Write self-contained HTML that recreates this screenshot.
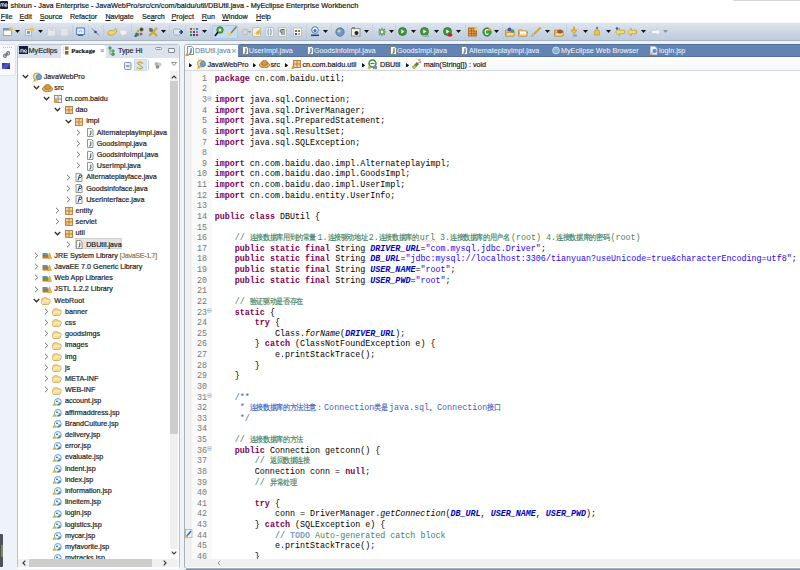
<!DOCTYPE html><html><head><meta charset="utf-8"><style>
html,body{margin:0;padding:0;width:800px;height:570px;overflow:hidden;background:#fff;}
body{position:relative;font-family:"Liberation Sans",sans-serif;}
div{position:absolute;box-sizing:border-box;}
.t{white-space:pre;line-height:1;color:#1e1e1e;-webkit-text-stroke:0.2px currentColor;}
.c{white-space:pre;font-family:"Liberation Mono",monospace;font-size:8.37px;line-height:10.62px;color:#000;}
.k{color:#7f0055;font-weight:bold;}
.s{color:#2a00ff;}
.cm{color:#3f7f5f;}
.jd{color:#3f5fbf;}
.f{color:#0000c0;font-weight:bold;font-style:italic;}
.i{font-style:italic;}
.zh{display:inline-block;width:6.64px;overflow:visible;font-size:7.1px;line-height:0;text-align:center;-webkit-text-stroke:0.15px currentColor;transform:scaleY(1.12);}
.todo{color:#7f9fbf;font-weight:bold;}
.ln{color:#787878;font-family:"Liberation Mono",monospace;font-size:8.35px;line-height:10.62px;text-align:right;white-space:pre;}

</style></head><body>
<div style="left:0px;top:0px;width:800px;height:11px;background:#fff;"></div>
<div style="left:0px;top:1px;width:8px;height:8px;background:#0f1d3a;border-radius:1px;"></div>
<svg style="position:absolute;left:0;top:1px" width="8" height="8" viewBox="0 0 8 8"><path d="M0.8 5.5V3.2Q0.8 2.5 1.6 2.5Q2.4 2.5 2.4 3.2V5.5M2.4 3.2Q2.4 2.5 3.2 2.5Q4 2.5 4 3.2V5.5" stroke="#e8eef6" stroke-width="0.8" fill="none"/><path d="M7.2 4.3H4.8Q4.8 2.6 6 2.6Q7.2 2.6 7.2 4.3ZM4.8 4.3Q4.8 5.6 6.2 5.6H7.2" stroke="#e8eef6" stroke-width="0.8" fill="none"/></svg>
<div class="t" style="left:10.6px;top:1.8px;font-size:7.32px;color:#1a1a1a;">shixun - Java Enterprise - JavaWebPro/src/cn/com/baidu/util/DBUtil.java - MyEclipse Enterprise Workbench</div>
<div class="t" style="left:0.8px;top:13.3px;font-size:7.2px;color:#1a1a1a;"><u>F</u>ile</div>
<div class="t" style="left:19.5px;top:13.3px;font-size:7.2px;color:#1a1a1a;"><u>E</u>dit</div>
<div class="t" style="left:39.8px;top:13.3px;font-size:7.2px;color:#1a1a1a;"><u>S</u>ource</div>
<div class="t" style="left:69.9px;top:13.3px;font-size:7.2px;color:#1a1a1a;">Refac<u>t</u>or</div>
<div class="t" style="left:105.4px;top:13.3px;font-size:7.2px;color:#1a1a1a;"><u>N</u>avigate</div>
<div class="t" style="left:142px;top:13.3px;font-size:7.2px;color:#1a1a1a;">Se<u>a</u>rch</div>
<div class="t" style="left:171.5px;top:13.3px;font-size:7.2px;color:#1a1a1a;"><u>P</u>roject</div>
<div class="t" style="left:201.8px;top:13.3px;font-size:7.2px;color:#1a1a1a;"><u>R</u>un</div>
<div class="t" style="left:222px;top:13.3px;font-size:7.2px;color:#1a1a1a;"><u>W</u>indow</div>
<div class="t" style="left:256px;top:13.3px;font-size:7.2px;color:#1a1a1a;"><u>H</u>elp</div>
<div style="left:0px;top:22px;width:800px;height:18.5px;background:linear-gradient(#dfe6ef,#c9d4e2 60%,#bccadb);"></div>
<div style="left:0px;top:22px;width:800px;height:1px;background:#f4f7fa;"></div>
<div style="left:733px;top:0px;width:67px;height:1.3px;background:#d6d6d6;border-radius:0 0 0 2px;"></div>
<div style="left:0px;top:40px;width:800px;height:1px;background:#a9b4c2;"></div>
<div style="left:0px;top:41px;width:800px;height:3px;background:#eef2f7;"></div>
<svg style="position:absolute;left:2.5px;top:26.8px" width="10" height="10" viewBox="0 0 10 10"><rect x="0.5" y="1.5" width="8" height="7" fill="#fbfbf6" stroke="#8a97a8" stroke-width="0.8"/><rect x="0.5" y="1.5" width="8" height="2" fill="#5a8fd0"/><circle cx="8" cy="2" r="2" fill="#f0c040"/></svg>
<svg style="position:absolute;left:15.0px;top:30.4px" width="5" height="3" viewBox="0 0 5 3"><path d="M0 0H5L2.5 3Z" fill="#111"/></svg>
<svg style="position:absolute;left:25px;top:26.8px" width="10" height="10" viewBox="0 0 10 10"><rect x="0.5" y="2.5" width="6" height="6" fill="#f5f8fb" stroke="#9aa8b8" stroke-width="0.8"/><rect x="2" y="4" width="3" height="3" fill="#6a9ad0"/><circle cx="7" cy="2.5" r="2" fill="#f0c040"/></svg>
<svg style="position:absolute;left:37.5px;top:30.4px" width="5" height="3" viewBox="0 0 5 3"><path d="M0 0H5L2.5 3Z" fill="#111"/></svg>
<svg style="position:absolute;left:47px;top:26.8px" width="9" height="10" viewBox="0 0 9 10"><rect x="0.5" y="1" width="8" height="8" fill="#e6e8ea" stroke="#c8cdd2" stroke-width="0.8"/><rect x="2.5" y="1" width="4" height="3" fill="#d2d5d9"/></svg>
<svg style="position:absolute;left:60px;top:26.8px" width="9" height="10" viewBox="0 0 9 10"><rect x="0.5" y="1" width="8" height="8" rx="2" fill="#e2e4e6" stroke="#cdd1d5" stroke-width="0.8"/></svg>
<div style="left:72px;top:25px;width:1px;height:13px;background:repeating-linear-gradient(#bcc6d2 0 1px,transparent 1px 2px);"></div>
<svg style="position:absolute;left:76px;top:26.8px" width="9" height="10" viewBox="0 0 9 10"><rect x="0.7" y="1" width="7.6" height="6.5" fill="#ffffff" stroke="#3a68b8" stroke-width="0.9"/><rect x="2" y="2.3" width="5" height="3.8" fill="#dce8f6"/><path d="M3 4.8L4.5 3.5L6 4.8" stroke="#6a8ab0" stroke-width="0.6" fill="none"/><rect x="2" y="8" width="5" height="1" fill="#3a68b8"/></svg>
<div style="left:88px;top:25px;width:1px;height:13px;background:repeating-linear-gradient(#bcc6d2 0 1px,transparent 1px 2px);"></div>
<svg style="position:absolute;left:91px;top:26.8px" width="9" height="10" viewBox="0 0 9 10"><path d="M1 1.5L8 8.5" stroke="#4a78c8" stroke-width="1"/><circle cx="4.5" cy="5" r="1.3" fill="#3a4a6a"/></svg>
<div style="left:103px;top:25px;width:1px;height:13px;background:repeating-linear-gradient(#bcc6d2 0 1px,transparent 1px 2px);"></div>
<svg style="position:absolute;left:107px;top:26.8px" width="10" height="10" viewBox="0 0 10 10"><path d="M0.5 6Q3 2 6 4L9 1.5L9.5 5Q7 9 2 8Z" fill="#f3d868" stroke="#b39630" stroke-width="0.7"/></svg>
<svg style="position:absolute;left:119px;top:26.8px" width="9" height="10" viewBox="0 0 9 10"><path d="M0.5 4Q4 1 8.5 5Q7 9 2 8Z" fill="#f2f2f2" stroke="#c8c8c8" stroke-width="0.7"/></svg>
<div style="left:131px;top:25px;width:1px;height:13px;background:repeating-linear-gradient(#bcc6d2 0 1px,transparent 1px 2px);"></div>
<svg style="position:absolute;left:134px;top:26.8px" width="10" height="10" viewBox="0 0 10 10"><circle cx="7.5" cy="2.5" r="2" fill="#444" stroke="#8c8" stroke-width="0.6"/><circle cx="3" cy="7.5" r="2" fill="#3a8a3a"/><circle cx="7" cy="7" r="1.5" fill="#d04080"/><circle cx="4" cy="4" r="1.3" fill="#e0a030"/><circle cx="1.5" cy="9" r="1.2" fill="#3060c0"/></svg>
<svg style="position:absolute;left:148px;top:26.8px" width="10" height="10" viewBox="0 0 10 10"><path d="M1 1L9 9M9 1L1 9" stroke="#d4a82a" stroke-width="2.2"/><circle cx="3" cy="3" r="2" fill="#6a6a8a"/></svg>
<svg style="position:absolute;left:161.0px;top:30.4px" width="5" height="3" viewBox="0 0 5 3"><path d="M0 0H5L2.5 3Z" fill="#111"/></svg>
<div style="left:169px;top:25px;width:1px;height:13px;background:repeating-linear-gradient(#bcc6d2 0 1px,transparent 1px 2px);"></div>
<svg style="position:absolute;left:173px;top:26.8px" width="10" height="10" viewBox="0 0 10 10"><rect x="0.5" y="2" width="7" height="6" rx="1.5" fill="#dde8f5" stroke="#8aa0b8" stroke-width="0.8"/><path d="M6 5L9.5 5M7.8 3L9.5 5L7.8 7" stroke="#1a2a4a" stroke-width="1.1" fill="none"/></svg>
<div style="left:185px;top:25px;width:1px;height:13px;background:repeating-linear-gradient(#bcc6d2 0 1px,transparent 1px 2px);"></div>
<svg style="position:absolute;left:189px;top:26.8px" width="10" height="10" viewBox="0 0 10 10"><rect x="1" y="1" width="2" height="2" fill="#d04040"/><rect x="4" y="1" width="2" height="2" fill="#e0a030"/><rect x="7" y="1" width="2" height="2" fill="#3a8ad0"/><rect x="1" y="4" width="2" height="2" fill="#40a040"/><rect x="4" y="4" width="2" height="2" fill="#3050c0"/><rect x="7" y="4" width="2" height="2" fill="#d060c0"/><rect x="1" y="7" width="2" height="2" fill="#208060"/><rect x="4" y="7" width="2" height="2" fill="#404040"/><rect x="7" y="7" width="2" height="2" fill="#a04020"/></svg>
<svg style="position:absolute;left:202.0px;top:30.4px" width="5" height="3" viewBox="0 0 5 3"><path d="M0 0H5L2.5 3Z" fill="#111"/></svg>
<div style="left:210px;top:25px;width:1px;height:13px;background:repeating-linear-gradient(#bcc6d2 0 1px,transparent 1px 2px);"></div>
<div style="left:212px;top:24.5px;width:26px;height:14.5px;background:#c6dcf2;border:1px solid #b0c8e4;border-radius:2px;"></div>
<svg style="position:absolute;left:214px;top:25.8px" width="10" height="11" viewBox="0 0 10 11"><circle cx="6" cy="4" r="3.2" fill="#5ab048" stroke="#2a6a20" stroke-width="0.8"/><circle cx="6" cy="4" r="1.2" fill="#fff"/><path d="M4 6L1 10" stroke="#111" stroke-width="1.5"/></svg>
<svg style="position:absolute;left:227px;top:25.8px" width="10" height="11" viewBox="0 0 10 11"><path d="M9.5 0.5L4 7" stroke="#7a7a40" stroke-width="1.2"/><path d="M0.5 10Q1 6 4 6.5Q6 8 3 10Z" fill="#f0d040"/></svg>
<svg style="position:absolute;left:241px;top:26.8px" width="10" height="10" viewBox="0 0 10 10"><circle cx="4" cy="5" r="3" fill="#d8d8d8" stroke="#a8a8a8" stroke-width="0.7"/><path d="M7 4H10L8.5 6Z" fill="#999"/></svg>
<svg style="position:absolute;left:252px;top:26.8px" width="10" height="10" viewBox="0 0 10 10"><rect x="0.5" y="0.5" width="8" height="9" rx="1.5" fill="#f2f0e6" stroke="#b8b49a" stroke-width="0.8"/><path d="M3 7Q6 2 9 3L7 8Z" fill="#e6b83a"/></svg>
<svg style="position:absolute;left:265px;top:26.8px" width="9" height="10" viewBox="0 0 9 10"><rect x="0.5" y="0.5" width="8" height="9" rx="1.5" fill="#f0f2f4" stroke="#b8bcc2" stroke-width="0.8"/><path d="M4 2Q3 2 3 3.5V6.5Q3 8 4 8M5 2Q6 2 6 3.5V6.5Q6 8 5 8" stroke="#4a6a9a" stroke-width="0.8" fill="none"/></svg>
<svg style="position:absolute;left:278px;top:26.8px" width="9" height="10" viewBox="0 0 9 10"><rect x="0.5" y="0.5" width="8" height="9" rx="1.5" fill="#f4f2e6" stroke="#c0b890" stroke-width="0.8"/><path d="M4 2.5V8M6 2.5V8M6.5 2.5H3.5Q2 2.5 2 4Q2 5.5 4 5.5" stroke="#2a5aa0" stroke-width="0.9" fill="none"/></svg>
<div style="left:290px;top:25px;width:1px;height:13px;background:repeating-linear-gradient(#bcc6d2 0 1px,transparent 1px 2px);"></div>
<svg style="position:absolute;left:293px;top:26.8px" width="9" height="10" viewBox="0 0 9 10"><rect x="0.5" y="1" width="8" height="8" fill="#fff" stroke="#b0b0b0" stroke-width="0.7"/><rect x="2" y="3" width="2" height="2" fill="#d04040"/><rect x="5" y="3" width="2" height="2" fill="#40a040"/><rect x="2" y="6" width="2" height="2" fill="#3050c0"/><rect x="5" y="6" width="2" height="2" fill="#e0a030"/></svg>
<div style="left:306px;top:25px;width:1px;height:13px;background:repeating-linear-gradient(#bcc6d2 0 1px,transparent 1px 2px);"></div>
<svg style="position:absolute;left:310px;top:25.8px" width="10" height="11" viewBox="0 0 10 11"><circle cx="5" cy="4" r="3.3" fill="#eef4fb" stroke="#4a7ab8" stroke-width="1"/><circle cx="5" cy="4.5" r="1.5" fill="#4a6a8a"/><rect x="1" y="8.5" width="8" height="1.6" fill="#2a4a7a"/></svg>
<svg style="position:absolute;left:322.5px;top:30.4px" width="5" height="3" viewBox="0 0 5 3"><path d="M0 0H5L2.5 3Z" fill="#111"/></svg>
<div style="left:331px;top:25px;width:1px;height:13px;background:repeating-linear-gradient(#bcc6d2 0 1px,transparent 1px 2px);"></div>
<svg style="position:absolute;left:335px;top:26.8px" width="10" height="10" viewBox="0 0 10 10"><circle cx="5" cy="5" r="4.2" fill="#6a9ad0" stroke="#3a6aa8" stroke-width="0.7"/><circle cx="4" cy="4" r="1.6" fill="#f0d070"/></svg>
<div style="left:347px;top:25px;width:1px;height:13px;background:repeating-linear-gradient(#bcc6d2 0 1px,transparent 1px 2px);"></div>
<svg style="position:absolute;left:351px;top:26.8px" width="10" height="10" viewBox="0 0 10 10"><rect x="0.5" y="1.5" width="8.5" height="7.5" fill="#efefe8" stroke="#8a8a80" stroke-width="0.9"/><circle cx="5.5" cy="6" r="2" fill="#222"/><rect x="1" y="0" width="3" height="2" fill="#888"/></svg>
<svg style="position:absolute;left:363.5px;top:30.4px" width="5" height="3" viewBox="0 0 5 3"><path d="M0 0H5L2.5 3Z" fill="#111"/></svg>
<div style="left:372px;top:25px;width:1px;height:13px;background:repeating-linear-gradient(#bcc6d2 0 1px,transparent 1px 2px);"></div>
<svg style="position:absolute;left:377px;top:26.8px" width="10" height="10" viewBox="0 0 10 10"><circle cx="5" cy="5" r="3" fill="#8ab08a"/><path d="M5 0.8V9.2M0.8 5H9.2M2 2L8 8M8 2L2 8" stroke="#6a946a" stroke-width="1.2"/><circle cx="5" cy="5" r="1.4" fill="#e8f0e8"/></svg>
<svg style="position:absolute;left:388.5px;top:30.4px" width="5" height="3" viewBox="0 0 5 3"><path d="M0 0H5L2.5 3Z" fill="#111"/></svg>
<div style="left:395px;top:25px;width:1px;height:13px;background:repeating-linear-gradient(#bcc6d2 0 1px,transparent 1px 2px);"></div>
<svg style="position:absolute;left:397.5px;top:26.8px" width="10" height="10" viewBox="0 0 10 10"><circle cx="4.5" cy="4.5" r="4" fill="#3a9a3a" stroke="#2a6a2a" stroke-width="0.7"/><path d="M3.3 2.5L6.5 4.5L3.3 6.5Z" fill="#fff"/></svg>
<svg style="position:absolute;left:411.0px;top:30.4px" width="5" height="3" viewBox="0 0 5 3"><path d="M0 0H5L2.5 3Z" fill="#111"/></svg>
<svg style="position:absolute;left:420px;top:26.8px" width="10" height="10" viewBox="0 0 10 10"><circle cx="4.5" cy="4.5" r="4" fill="#3a9a3a" stroke="#2a6a2a" stroke-width="0.7"/><path d="M3.3 2.5L6.5 4.5L3.3 6.5Z" fill="#fff"/><rect x="3" y="8" width="6" height="2" fill="#9ab0c8"/></svg>
<svg style="position:absolute;left:433.5px;top:30.4px" width="5" height="3" viewBox="0 0 5 3"><path d="M0 0H5L2.5 3Z" fill="#111"/></svg>
<svg style="position:absolute;left:443px;top:26.8px" width="10" height="10" viewBox="0 0 10 10"><circle cx="4.5" cy="4.5" r="4" fill="#3a9a3a" stroke="#2a6a2a" stroke-width="0.7"/><path d="M3.3 2.5L6.5 4.5L3.3 6.5Z" fill="#fff"/><ellipse cx="7" cy="8" rx="2.5" ry="1.8" fill="#d02020"/></svg>
<svg style="position:absolute;left:455.5px;top:30.4px" width="5" height="3" viewBox="0 0 5 3"><path d="M0 0H5L2.5 3Z" fill="#111"/></svg>
<div style="left:465px;top:25px;width:1px;height:13px;background:repeating-linear-gradient(#bcc6d2 0 1px,transparent 1px 2px);"></div>
<svg style="position:absolute;left:468px;top:26.8px" width="10" height="10" viewBox="0 0 10 10"><rect x="0.5" y="1" width="8" height="8" fill="#e8a050" stroke="#9a5a1e" stroke-width="0.8"/><path d="M3.5 1V9M6 1V9M0.5 4H8.5M0.5 6.5H8.5" stroke="#9a5a1e" stroke-width="0.7"/><circle cx="8" cy="2" r="1.8" fill="#f0d060"/></svg>
<svg style="position:absolute;left:482px;top:26.8px" width="10" height="10" viewBox="0 0 10 10"><circle cx="5" cy="5" r="4.2" fill="#3a9a3a" stroke="#2a6a2a" stroke-width="0.6"/><path d="M6.5 3Q5 2 3.5 3.5Q2.5 5.5 4 7Q5.5 7.8 6.5 6.5" stroke="#fff" stroke-width="1.2" fill="none"/><circle cx="7.5" cy="2.5" r="1.6" fill="#e8a040"/></svg>
<svg style="position:absolute;left:493.5px;top:30.4px" width="5" height="3" viewBox="0 0 5 3"><path d="M0 0H5L2.5 3Z" fill="#111"/></svg>
<div style="left:502px;top:25px;width:1px;height:13px;background:repeating-linear-gradient(#bcc6d2 0 1px,transparent 1px 2px);"></div>
<svg style="position:absolute;left:505px;top:26.8px" width="10" height="10" viewBox="0 0 10 10"><path d="M0.5 3H4L5 4H9V9H0.5Z" fill="#f2c060" stroke="#b08430" stroke-width="0.7"/><path d="M0.5 9L1.8 5.5H9.5L8.5 9Z" fill="#f8dc98" stroke="#b08430" stroke-width="0.6"/><circle cx="4.5" cy="2.5" r="2" fill="#5050b0"/><circle cx="7.5" cy="4" r="1.8" fill="#40a040"/></svg>
<svg style="position:absolute;left:518px;top:26.8px" width="10" height="10" viewBox="0 0 10 10"><path d="M0.5 3H4L5 4H9V9H0.5Z" fill="#f2c060" stroke="#b08430" stroke-width="0.7"/><path d="M0.5 9L1.8 5.5H9.5L8.5 9Z" fill="#f8dc98" stroke="#b08430" stroke-width="0.6"/><rect x="2" y="4.5" width="6" height="2" fill="#fff"/></svg>
<svg style="position:absolute;left:531px;top:26.8px" width="10" height="10" viewBox="0 0 10 10"><path d="M9.5 0.5L3 7" stroke="#d0a040" stroke-width="1.8"/><path d="M0.5 9.5L2 6.5L3.5 8Z" fill="#f4f0e0" stroke="#8a8a70" stroke-width="0.6"/></svg>
<svg style="position:absolute;left:544.5px;top:30.4px" width="5" height="3" viewBox="0 0 5 3"><path d="M0 0H5L2.5 3Z" fill="#111"/></svg>
<svg style="position:absolute;left:554px;top:26.8px" width="10" height="10" viewBox="0 0 10 10"><path d="M0.5 3H4L5 4H9V9H0.5Z" fill="#f2c060" stroke="#b08430" stroke-width="0.7"/><path d="M0.5 9L1.8 5.5H9.5L8.5 9Z" fill="#f8dc98" stroke="#b08430" stroke-width="0.6"/><ellipse cx="6" cy="4.5" rx="2.8" ry="2" fill="#a05a30"/></svg>
<div style="left:566px;top:25px;width:1px;height:13px;background:repeating-linear-gradient(#bcc6d2 0 1px,transparent 1px 2px);"></div>
<svg style="position:absolute;left:570px;top:25.8px" width="8" height="11" viewBox="0 0 8 11"><path d="M4 0.5V6" stroke="#d0a030" stroke-width="1.6"/><path d="M1 4L4 8L7 4Z" fill="#f0c840" stroke="#b08a20" stroke-width="0.6"/><rect x="3" y="8.5" width="4" height="2" fill="#8aa0c0"/></svg>
<svg style="position:absolute;left:582.5px;top:30.4px" width="5" height="3" viewBox="0 0 5 3"><path d="M0 0H5L2.5 3Z" fill="#111"/></svg>
<svg style="position:absolute;left:593px;top:25.8px" width="8" height="11" viewBox="0 0 8 11"><circle cx="4" cy="2" r="1.2" fill="#5a78c0"/><path d="M2 4H6L6.5 9H1.5Z" fill="#f0c840" stroke="#b08a20" stroke-width="0.6"/></svg>
<svg style="position:absolute;left:605.5px;top:30.4px" width="5" height="3" viewBox="0 0 5 3"><path d="M0 0H5L2.5 3Z" fill="#111"/></svg>
<svg style="position:absolute;left:615px;top:26.8px" width="10" height="10" viewBox="0 0 10 10"><path d="M0.5 5L4.5 1.2V3.3H9.5V6.7H4.5V8.8Z" fill="#f4dc70" stroke="#b8a040" stroke-width="0.8"/><circle cx="2" cy="1.5" r="1.2" fill="#3050a0"/></svg>
<svg style="position:absolute;left:627px;top:26.8px" width="10" height="10" viewBox="0 0 10 10"><path d="M0.5 5L4.5 1.2V3.3H9.5V6.7H4.5V8.8Z" fill="#f4dc70" stroke="#b8a040" stroke-width="0.8"/></svg>
<svg style="position:absolute;left:640.5px;top:30.4px" width="5" height="3" viewBox="0 0 5 3"><path d="M0 0H5L2.5 3Z" fill="#111"/></svg>
<svg style="position:absolute;left:651px;top:26.8px" width="10" height="10" viewBox="0 0 10 10"><path d="M9.5 5L5.5 1.2V3.3H0.5V6.7H5.5V8.8Z" fill="#f6f6f6" stroke="#c4c8cc" stroke-width="0.8"/></svg>
<svg style="position:absolute;left:663.0px;top:30.4px" width="5" height="3" viewBox="0 0 5 3"><path d="M0 0H5L2.5 3Z" fill="#8a94a0"/></svg>
<div style="left:0px;top:44px;width:800px;height:526px;background:#eef2f9;"></div>
<div style="left:-3px;top:43.5px;width:18.5px;height:32px;background:#f8fafd;border:1px solid #dde3ec;border-radius:3px;"></div>
<div style="left:17.1px;top:43.6px;width:163.4px;height:525px;background:#fff;border:1.3px solid #b9c1cc;border-radius:3px 3px 3px 3px;"></div>
<div style="left:18.4px;top:44.6px;width:161px;height:13px;background:#dbe3ed;border-radius:2px 2px 0 0;"></div>
<div style="left:18.9px;top:45.9px;width:9px;height:8.6px;background:#0f1d3a;"></div>
<svg style="position:absolute;left:19px;top:46.5px" width="9" height="8" viewBox="0 0 8 8"><path d="M0.8 5.5V3.2Q0.8 2.5 1.6 2.5Q2.4 2.5 2.4 3.2V5.5M2.4 3.2Q2.4 2.5 3.2 2.5Q4 2.5 4 3.2V5.5" stroke="#e8eef6" stroke-width="0.8" fill="none"/><path d="M7.2 4.3H4.8Q4.8 2.6 6 2.6Q7.2 2.6 7.2 4.3ZM4.8 4.3Q4.8 5.6 6.2 5.6H7.2" stroke="#e8eef6" stroke-width="0.8" fill="none"/></svg>
<div class="t" style="left:28.6px;top:47.3px;font-size:7.2px;color:#1f2b3a;">MyEclips</div>
<div style="left:61.1px;top:44.6px;width:44.6px;height:13.4px;background:#fff;border-radius:3px 3px 0 0;"></div>
<div class="t" style="left:71.2px;top:48.0px;font-size:6.7px;font-family:'Liberation Serif',serif;font-weight:bold;color:#222;font-size:6.7px;">Package</div>
<svg style="position:absolute;left:63px;top:46px" width="6" height="9" viewBox="0 0 6 9"><rect x="2" y="0.5" width="3.5" height="3.5" fill="#c07830"/><rect x="2" y="5" width="3.5" height="3.5" fill="#a05a20"/><path d="M0.8 0.5V8.5" stroke="#9ab0c8" stroke-width="1" stroke-dasharray="1 1"/></svg>
<svg style="position:absolute;left:107.5px;top:45.5px" width="7" height="10" viewBox="0 0 7 10"><circle cx="2" cy="2" r="1.7" fill="#4a9a5a"/><circle cx="5" cy="5" r="1.7" fill="#5aa86a"/><circle cx="5" cy="8.2" r="1.7" fill="#4a9a5a"/><path d="M2 3.5V8.2H3.5M2 5H3.5" stroke="#6a8a6a" stroke-width="0.7" fill="none"/></svg>
<div class="t" style="left:100px;top:47px;font-size:8px;color:#999;font-size:8px;">×</div>
<div class="t" style="left:118px;top:47.3px;font-size:7.2px;color:#1f2b3a;">Type Hi</div>
<div style="left:18.4px;top:57.5px;width:161px;height:511px;background:#fff;"></div>
<svg style="position:absolute;left:22.25px;top:73.75px" width="7" height="5" viewBox="0 0 7 5"><path d="M0.8 1 L3.5 3.8 L6.2 1" fill="none" stroke="#2e2e2e" stroke-width="1.25"/></svg>
<svg style="position:absolute;left:31.75px;top:71.75px" width="11" height="10" viewBox="0 0 11 10"><circle cx="5" cy="4.5" r="3.6" fill="#f3d88c" stroke="#b08a36" stroke-width="0.8"/><circle cx="7" cy="5" r="2.6" fill="#6aa3d8" stroke="#2f6fb0" stroke-width="0.6"/><path d="M1 9.5L2.8 6.5L4.4 9.5Z" fill="#e6a82c"/></svg>
<div class="t" style="left:43.75px;top:72.65px;font-size:7.2px;color:#1e1e1e;">JavaWebPro</div>
<svg style="position:absolute;left:32.85px;top:84.95px" width="7" height="5" viewBox="0 0 7 5"><path d="M0.8 1 L3.5 3.8 L6.2 1" fill="none" stroke="#2e2e2e" stroke-width="1.25"/></svg>
<svg style="position:absolute;left:42.35px;top:83.95px" width="11" height="8" viewBox="0 0 11 8"><ellipse cx="5.5" cy="5" rx="5" ry="2.6" fill="#e8b25a" stroke="#a06d20" stroke-width="0.8"/><ellipse cx="5.5" cy="3" rx="3" ry="2.6" fill="#d29a48" stroke="#a06d20" stroke-width="0.8"/></svg>
<div class="t" style="left:54.35px;top:83.85000000000001px;font-size:7.2px;color:#1e1e1e;">src</div>
<svg style="position:absolute;left:43.45px;top:96.15px" width="7" height="5" viewBox="0 0 7 5"><path d="M0.8 1 L3.5 3.8 L6.2 1" fill="none" stroke="#2e2e2e" stroke-width="1.25"/></svg>
<svg style="position:absolute;left:53.95px;top:95.15px" width="8" height="8" viewBox="0 0 8 8"><rect x="0.5" y="0.5" width="7" height="7" fill="#f4f4f4" stroke="#8c8c8c" stroke-width="1"/><path d="M4 0.5V7.5M0.5 4H7.5" stroke="#8c8c8c" stroke-width="1"/><rect x="0" y="4.5" width="3" height="3.5" fill="#e0a040"/></svg>
<div class="t" style="left:64.95px;top:95.05000000000001px;font-size:7.2px;color:#1e1e1e;">cn.com.baidu</div>
<svg style="position:absolute;left:54.05px;top:107.35px" width="7" height="5" viewBox="0 0 7 5"><path d="M0.8 1 L3.5 3.8 L6.2 1" fill="none" stroke="#2e2e2e" stroke-width="1.25"/></svg>
<svg style="position:absolute;left:64.55px;top:106.35px" width="8" height="8" viewBox="0 0 8 8"><rect x="0.5" y="0.5" width="7" height="7" fill="#f0cf98" stroke="#b37a3c" stroke-width="0.9"/><path d="M4 0.5V7.5M0.5 4H7.5" stroke="#b37a3c" stroke-width="0.9"/></svg>
<div class="t" style="left:75.55px;top:106.25px;font-size:7.2px;color:#1e1e1e;">dao</div>
<svg style="position:absolute;left:64.65px;top:118.55px" width="7" height="5" viewBox="0 0 7 5"><path d="M0.8 1 L3.5 3.8 L6.2 1" fill="none" stroke="#2e2e2e" stroke-width="1.25"/></svg>
<svg style="position:absolute;left:75.15px;top:117.55px" width="8" height="8" viewBox="0 0 8 8"><rect x="0.5" y="0.5" width="7" height="7" fill="#f0cf98" stroke="#b37a3c" stroke-width="0.9"/><path d="M4 0.5V7.5M0.5 4H7.5" stroke="#b37a3c" stroke-width="0.9"/></svg>
<div class="t" style="left:86.15px;top:117.45px;font-size:7.2px;color:#1e1e1e;">impl</div>
<svg style="position:absolute;left:76.25px;top:128.75px" width="5" height="7" viewBox="0 0 5 7"><path d="M1 0.8 L3.8 3.5 L1 6.2" fill="none" stroke="#6e6e6e" stroke-width="1"/></svg>
<svg style="position:absolute;left:85.75px;top:128.25px" width="8" height="9" viewBox="0 0 8 9"><path d="M1.5 0.5H5.5L7 2V8.5H1.5Z" fill="#fbfbf4" stroke="#8b8b78" stroke-width="0.9"/><path d="M4.8 2.5V6Q4.8 7.2 3.3 7" stroke="#2d4fa0" stroke-width="1" fill="none"/></svg>
<div class="t" style="left:96.75px;top:128.65px;font-size:7.2px;color:#1e1e1e;">Alternateplayimpl.java</div>
<svg style="position:absolute;left:76.25px;top:139.95px" width="5" height="7" viewBox="0 0 5 7"><path d="M1 0.8 L3.8 3.5 L1 6.2" fill="none" stroke="#6e6e6e" stroke-width="1"/></svg>
<svg style="position:absolute;left:85.75px;top:139.45px" width="8" height="9" viewBox="0 0 8 9"><path d="M1.5 0.5H5.5L7 2V8.5H1.5Z" fill="#fbfbf4" stroke="#8b8b78" stroke-width="0.9"/><path d="M4.8 2.5V6Q4.8 7.2 3.3 7" stroke="#2d4fa0" stroke-width="1" fill="none"/></svg>
<div class="t" style="left:96.75px;top:139.85px;font-size:7.2px;color:#1e1e1e;">GoodsImpl.java</div>
<svg style="position:absolute;left:76.25px;top:151.14999999999998px" width="5" height="7" viewBox="0 0 5 7"><path d="M1 0.8 L3.8 3.5 L1 6.2" fill="none" stroke="#6e6e6e" stroke-width="1"/></svg>
<svg style="position:absolute;left:85.75px;top:150.64999999999998px" width="8" height="9" viewBox="0 0 8 9"><path d="M1.5 0.5H5.5L7 2V8.5H1.5Z" fill="#fbfbf4" stroke="#8b8b78" stroke-width="0.9"/><path d="M4.8 2.5V6Q4.8 7.2 3.3 7" stroke="#2d4fa0" stroke-width="1" fill="none"/></svg>
<div class="t" style="left:96.75px;top:151.04999999999998px;font-size:7.2px;color:#1e1e1e;">GoodsinfoImpl.java</div>
<svg style="position:absolute;left:76.25px;top:162.35px" width="5" height="7" viewBox="0 0 5 7"><path d="M1 0.8 L3.8 3.5 L1 6.2" fill="none" stroke="#6e6e6e" stroke-width="1"/></svg>
<svg style="position:absolute;left:85.75px;top:161.85px" width="8" height="9" viewBox="0 0 8 9"><path d="M1.5 0.5H5.5L7 2V8.5H1.5Z" fill="#fbfbf4" stroke="#8b8b78" stroke-width="0.9"/><path d="M4.8 2.5V6Q4.8 7.2 3.3 7" stroke="#2d4fa0" stroke-width="1" fill="none"/></svg>
<div class="t" style="left:96.75px;top:162.25px;font-size:7.2px;color:#1e1e1e;">UserImpl.java</div>
<svg style="position:absolute;left:65.65px;top:173.55px" width="5" height="7" viewBox="0 0 5 7"><path d="M1 0.8 L3.8 3.5 L1 6.2" fill="none" stroke="#6e6e6e" stroke-width="1"/></svg>
<svg style="position:absolute;left:75.15px;top:173.05px" width="8" height="9" viewBox="0 0 8 9"><path d="M1 0.5H5.5L7 2V8.5H1Z" fill="#fbfbf4" stroke="#8b8b78" stroke-width="0.9"/><path d="M3 7.5L4.5 2H6Q6.8 2 6.5 3.4Q6.2 4.6 5 4.6H3.9" stroke="#1f3f9f" stroke-width="1" fill="none"/></svg>
<div class="t" style="left:86.15px;top:173.45000000000002px;font-size:7.2px;color:#1e1e1e;">Alternateplayface.java</div>
<svg style="position:absolute;left:65.65px;top:184.75px" width="5" height="7" viewBox="0 0 5 7"><path d="M1 0.8 L3.8 3.5 L1 6.2" fill="none" stroke="#6e6e6e" stroke-width="1"/></svg>
<svg style="position:absolute;left:75.15px;top:184.25px" width="8" height="9" viewBox="0 0 8 9"><path d="M1 0.5H5.5L7 2V8.5H1Z" fill="#fbfbf4" stroke="#8b8b78" stroke-width="0.9"/><path d="M3 7.5L4.5 2H6Q6.8 2 6.5 3.4Q6.2 4.6 5 4.6H3.9" stroke="#1f3f9f" stroke-width="1" fill="none"/></svg>
<div class="t" style="left:86.15px;top:184.65px;font-size:7.2px;color:#1e1e1e;">Goodsinfoface.java</div>
<svg style="position:absolute;left:65.65px;top:195.95px" width="5" height="7" viewBox="0 0 5 7"><path d="M1 0.8 L3.8 3.5 L1 6.2" fill="none" stroke="#6e6e6e" stroke-width="1"/></svg>
<svg style="position:absolute;left:75.15px;top:195.45px" width="8" height="9" viewBox="0 0 8 9"><path d="M1 0.5H5.5L7 2V8.5H1Z" fill="#fbfbf4" stroke="#8b8b78" stroke-width="0.9"/><path d="M3 7.5L4.5 2H6Q6.8 2 6.5 3.4Q6.2 4.6 5 4.6H3.9" stroke="#1f3f9f" stroke-width="1" fill="none"/></svg>
<div class="t" style="left:86.15px;top:195.85px;font-size:7.2px;color:#1e1e1e;">UserInterface.java</div>
<svg style="position:absolute;left:55.05px;top:207.14999999999998px" width="5" height="7" viewBox="0 0 5 7"><path d="M1 0.8 L3.8 3.5 L1 6.2" fill="none" stroke="#6e6e6e" stroke-width="1"/></svg>
<svg style="position:absolute;left:64.55px;top:207.14999999999998px" width="8" height="8" viewBox="0 0 8 8"><rect x="0.5" y="0.5" width="7" height="7" fill="#f0cf98" stroke="#b37a3c" stroke-width="0.9"/><path d="M4 0.5V7.5M0.5 4H7.5" stroke="#b37a3c" stroke-width="0.9"/></svg>
<div class="t" style="left:75.55px;top:207.04999999999998px;font-size:7.2px;color:#1e1e1e;">entity</div>
<svg style="position:absolute;left:55.05px;top:218.35px" width="5" height="7" viewBox="0 0 5 7"><path d="M1 0.8 L3.8 3.5 L1 6.2" fill="none" stroke="#6e6e6e" stroke-width="1"/></svg>
<svg style="position:absolute;left:64.55px;top:218.35px" width="8" height="8" viewBox="0 0 8 8"><rect x="0.5" y="0.5" width="7" height="7" fill="#f0cf98" stroke="#b37a3c" stroke-width="0.9"/><path d="M4 0.5V7.5M0.5 4H7.5" stroke="#b37a3c" stroke-width="0.9"/><path d="M0 8L1.6 5L3.2 8Z" fill="#e0a030"/><circle cx="1.6" cy="4.6" r="0.9" fill="#e0a030"/></svg>
<div class="t" style="left:75.55px;top:218.25px;font-size:7.2px;color:#1e1e1e;">servlet</div>
<svg style="position:absolute;left:54.05px;top:230.54999999999998px" width="7" height="5" viewBox="0 0 7 5"><path d="M0.8 1 L3.5 3.8 L6.2 1" fill="none" stroke="#2e2e2e" stroke-width="1.25"/></svg>
<svg style="position:absolute;left:64.55px;top:229.54999999999998px" width="8" height="8" viewBox="0 0 8 8"><rect x="0.5" y="0.5" width="7" height="7" fill="#f0cf98" stroke="#b37a3c" stroke-width="0.9"/><path d="M4 0.5V7.5M0.5 4H7.5" stroke="#b37a3c" stroke-width="0.9"/><path d="M0 8L1.6 5L3.2 8Z" fill="#e0a030"/><circle cx="1.6" cy="4.6" r="0.9" fill="#e0a030"/></svg>
<div class="t" style="left:75.55px;top:229.45px;font-size:7.2px;color:#1e1e1e;">util</div>
<svg style="position:absolute;left:65.65px;top:240.75px" width="5" height="7" viewBox="0 0 5 7"><path d="M1 0.8 L3.8 3.5 L1 6.2" fill="none" stroke="#6e6e6e" stroke-width="1"/></svg>
<div style="left:74.65px;top:238.25px;width:47px;height:11px;background:#e4e4e4;border:1px solid #d2d2d2;"></div>
<svg style="position:absolute;left:75.15px;top:240.25px" width="8" height="9" viewBox="0 0 8 9"><path d="M1.5 0.5H5.5L7 2V8.5H1.5Z" fill="#fbfbf4" stroke="#8b8b78" stroke-width="0.9"/><path d="M4.8 2.5V6Q4.8 7.2 3.3 7" stroke="#2d4fa0" stroke-width="1" fill="none"/></svg>
<div class="t" style="left:86.15px;top:240.65px;font-size:7.2px;color:#1e1e1e;">DBUtil.java</div>
<svg style="position:absolute;left:33.85px;top:251.95px" width="5" height="7" viewBox="0 0 5 7"><path d="M1 0.8 L3.8 3.5 L1 6.2" fill="none" stroke="#6e6e6e" stroke-width="1"/></svg>
<svg style="position:absolute;left:42.35px;top:252.45px" width="10" height="7" viewBox="0 0 10 7"><rect x="0.5" y="4" width="6" height="2.5" fill="#c8742a"/><rect x="0.5" y="2.3" width="6" height="1.8" fill="#4a9a5a"/><rect x="0.5" y="1.2" width="5" height="1.2" fill="#3a6ab0"/><path d="M6 6.5L7.6 0.8L9.6 6.5Z" fill="#f0b830" stroke="#c08a20" stroke-width="0.5"/></svg>
<div class="t" style="left:54.35px;top:251.85px;font-size:7.2px;color:#1e1e1e;">JRE System Library <span style="color:#957d47;letter-spacing:-0.35px">[JavaSE-1.7]</span></div>
<svg style="position:absolute;left:33.85px;top:263.15px" width="5" height="7" viewBox="0 0 5 7"><path d="M1 0.8 L3.8 3.5 L1 6.2" fill="none" stroke="#6e6e6e" stroke-width="1"/></svg>
<svg style="position:absolute;left:42.35px;top:263.65px" width="10" height="7" viewBox="0 0 10 7"><rect x="0.5" y="4" width="6" height="2.5" fill="#c8742a"/><rect x="0.5" y="2.3" width="6" height="1.8" fill="#4a9a5a"/><rect x="0.5" y="1.2" width="5" height="1.2" fill="#3a6ab0"/><path d="M6 6.5L7.6 0.8L9.6 6.5Z" fill="#f0b830" stroke="#c08a20" stroke-width="0.5"/></svg>
<div class="t" style="left:54.35px;top:263.04999999999995px;font-size:7.2px;color:#1e1e1e;">JavaEE 7.0 Generic Library</div>
<svg style="position:absolute;left:33.85px;top:274.35px" width="5" height="7" viewBox="0 0 5 7"><path d="M1 0.8 L3.8 3.5 L1 6.2" fill="none" stroke="#6e6e6e" stroke-width="1"/></svg>
<svg style="position:absolute;left:42.35px;top:274.85px" width="10" height="7" viewBox="0 0 10 7"><rect x="0.5" y="4" width="6" height="2.5" fill="#c8742a"/><rect x="0.5" y="2.3" width="6" height="1.8" fill="#4a9a5a"/><rect x="0.5" y="1.2" width="5" height="1.2" fill="#3a6ab0"/><path d="M6 6.5L7.6 0.8L9.6 6.5Z" fill="#f0b830" stroke="#c08a20" stroke-width="0.5"/></svg>
<div class="t" style="left:54.35px;top:274.25px;font-size:7.2px;color:#1e1e1e;">Web App Libraries</div>
<svg style="position:absolute;left:33.85px;top:285.54999999999995px" width="5" height="7" viewBox="0 0 5 7"><path d="M1 0.8 L3.8 3.5 L1 6.2" fill="none" stroke="#6e6e6e" stroke-width="1"/></svg>
<svg style="position:absolute;left:42.35px;top:286.04999999999995px" width="10" height="7" viewBox="0 0 10 7"><rect x="0.5" y="4" width="6" height="2.5" fill="#c8742a"/><rect x="0.5" y="2.3" width="6" height="1.8" fill="#4a9a5a"/><rect x="0.5" y="1.2" width="5" height="1.2" fill="#3a6ab0"/><path d="M6 6.5L7.6 0.8L9.6 6.5Z" fill="#f0b830" stroke="#c08a20" stroke-width="0.5"/></svg>
<div class="t" style="left:54.35px;top:285.44999999999993px;font-size:7.2px;color:#1e1e1e;">JSTL 1.2.2 Library</div>
<svg style="position:absolute;left:32.85px;top:297.75px" width="7" height="5" viewBox="0 0 7 5"><path d="M0.8 1 L3.5 3.8 L6.2 1" fill="none" stroke="#2e2e2e" stroke-width="1.25"/></svg>
<svg style="position:absolute;left:41.35px;top:296.95px" width="10" height="8" viewBox="0 0 10 8"><path d="M0.8 2.5Q1 0.8 3 0.8H5Q6 0.8 6.5 2H8Q9.3 2.2 9.3 3.5L8.5 6.5Q8 7.5 6.5 7.5H2Q0.7 7.5 0.7 6Z" fill="#f5dc94" stroke="#c9a048" stroke-width="0.8"/><path d="M1.2 6.8L2.5 4H9.3" stroke="#fff6d0" stroke-width="0.9" fill="none"/></svg>
<div class="t" style="left:54.35px;top:296.65px;font-size:7.2px;color:#1e1e1e;">WebRoot</div>
<svg style="position:absolute;left:44.45px;top:307.95px" width="5" height="7" viewBox="0 0 5 7"><path d="M1 0.8 L3.8 3.5 L1 6.2" fill="none" stroke="#6e6e6e" stroke-width="1"/></svg>
<svg style="position:absolute;left:51.95px;top:308.15px" width="10" height="8" viewBox="0 0 10 8"><path d="M0.8 2.5Q1 0.8 3 0.8H5Q6 0.8 6.5 2H8Q9.3 2.2 9.3 3.5L8.5 6.5Q8 7.5 6.5 7.5H2Q0.7 7.5 0.7 6Z" fill="#f5dc94" stroke="#c9a048" stroke-width="0.8"/><path d="M1.2 6.8L2.5 4H9.3" stroke="#fff6d0" stroke-width="0.9" fill="none"/></svg>
<div class="t" style="left:64.95px;top:307.84999999999997px;font-size:7.2px;color:#1e1e1e;">banner</div>
<svg style="position:absolute;left:44.45px;top:319.15px" width="5" height="7" viewBox="0 0 5 7"><path d="M1 0.8 L3.8 3.5 L1 6.2" fill="none" stroke="#6e6e6e" stroke-width="1"/></svg>
<svg style="position:absolute;left:51.95px;top:319.34999999999997px" width="10" height="8" viewBox="0 0 10 8"><path d="M0.8 2.5Q1 0.8 3 0.8H5Q6 0.8 6.5 2H8Q9.3 2.2 9.3 3.5L8.5 6.5Q8 7.5 6.5 7.5H2Q0.7 7.5 0.7 6Z" fill="#f5dc94" stroke="#c9a048" stroke-width="0.8"/><path d="M1.2 6.8L2.5 4H9.3" stroke="#fff6d0" stroke-width="0.9" fill="none"/></svg>
<div class="t" style="left:64.95px;top:319.04999999999995px;font-size:7.2px;color:#1e1e1e;">css</div>
<svg style="position:absolute;left:44.45px;top:330.34999999999997px" width="5" height="7" viewBox="0 0 5 7"><path d="M1 0.8 L3.8 3.5 L1 6.2" fill="none" stroke="#6e6e6e" stroke-width="1"/></svg>
<svg style="position:absolute;left:51.95px;top:330.54999999999995px" width="10" height="8" viewBox="0 0 10 8"><path d="M0.8 2.5Q1 0.8 3 0.8H5Q6 0.8 6.5 2H8Q9.3 2.2 9.3 3.5L8.5 6.5Q8 7.5 6.5 7.5H2Q0.7 7.5 0.7 6Z" fill="#f5dc94" stroke="#c9a048" stroke-width="0.8"/><path d="M1.2 6.8L2.5 4H9.3" stroke="#fff6d0" stroke-width="0.9" fill="none"/></svg>
<div class="t" style="left:64.95px;top:330.24999999999994px;font-size:7.2px;color:#1e1e1e;">goodsImgs</div>
<svg style="position:absolute;left:44.45px;top:341.54999999999995px" width="5" height="7" viewBox="0 0 5 7"><path d="M1 0.8 L3.8 3.5 L1 6.2" fill="none" stroke="#6e6e6e" stroke-width="1"/></svg>
<svg style="position:absolute;left:51.95px;top:341.74999999999994px" width="10" height="8" viewBox="0 0 10 8"><path d="M0.8 2.5Q1 0.8 3 0.8H5Q6 0.8 6.5 2H8Q9.3 2.2 9.3 3.5L8.5 6.5Q8 7.5 6.5 7.5H2Q0.7 7.5 0.7 6Z" fill="#f5dc94" stroke="#c9a048" stroke-width="0.8"/><path d="M1.2 6.8L2.5 4H9.3" stroke="#fff6d0" stroke-width="0.9" fill="none"/></svg>
<div class="t" style="left:64.95px;top:341.44999999999993px;font-size:7.2px;color:#1e1e1e;">images</div>
<svg style="position:absolute;left:44.45px;top:352.75px" width="5" height="7" viewBox="0 0 5 7"><path d="M1 0.8 L3.8 3.5 L1 6.2" fill="none" stroke="#6e6e6e" stroke-width="1"/></svg>
<svg style="position:absolute;left:51.95px;top:352.95px" width="10" height="8" viewBox="0 0 10 8"><path d="M0.8 2.5Q1 0.8 3 0.8H5Q6 0.8 6.5 2H8Q9.3 2.2 9.3 3.5L8.5 6.5Q8 7.5 6.5 7.5H2Q0.7 7.5 0.7 6Z" fill="#f5dc94" stroke="#c9a048" stroke-width="0.8"/><path d="M1.2 6.8L2.5 4H9.3" stroke="#fff6d0" stroke-width="0.9" fill="none"/></svg>
<div class="t" style="left:64.95px;top:352.65px;font-size:7.2px;color:#1e1e1e;">img</div>
<svg style="position:absolute;left:44.45px;top:363.95px" width="5" height="7" viewBox="0 0 5 7"><path d="M1 0.8 L3.8 3.5 L1 6.2" fill="none" stroke="#6e6e6e" stroke-width="1"/></svg>
<svg style="position:absolute;left:51.95px;top:364.15px" width="10" height="8" viewBox="0 0 10 8"><path d="M0.8 2.5Q1 0.8 3 0.8H5Q6 0.8 6.5 2H8Q9.3 2.2 9.3 3.5L8.5 6.5Q8 7.5 6.5 7.5H2Q0.7 7.5 0.7 6Z" fill="#f5dc94" stroke="#c9a048" stroke-width="0.8"/><path d="M1.2 6.8L2.5 4H9.3" stroke="#fff6d0" stroke-width="0.9" fill="none"/></svg>
<div class="t" style="left:64.95px;top:363.84999999999997px;font-size:7.2px;color:#1e1e1e;">js</div>
<svg style="position:absolute;left:44.45px;top:375.15px" width="5" height="7" viewBox="0 0 5 7"><path d="M1 0.8 L3.8 3.5 L1 6.2" fill="none" stroke="#6e6e6e" stroke-width="1"/></svg>
<svg style="position:absolute;left:51.95px;top:375.34999999999997px" width="10" height="8" viewBox="0 0 10 8"><path d="M0.8 2.5Q1 0.8 3 0.8H5Q6 0.8 6.5 2H8Q9.3 2.2 9.3 3.5L8.5 6.5Q8 7.5 6.5 7.5H2Q0.7 7.5 0.7 6Z" fill="#f5dc94" stroke="#c9a048" stroke-width="0.8"/><path d="M1.2 6.8L2.5 4H9.3" stroke="#fff6d0" stroke-width="0.9" fill="none"/></svg>
<div class="t" style="left:64.95px;top:375.04999999999995px;font-size:7.2px;color:#1e1e1e;">META-INF</div>
<svg style="position:absolute;left:44.45px;top:386.34999999999997px" width="5" height="7" viewBox="0 0 5 7"><path d="M1 0.8 L3.8 3.5 L1 6.2" fill="none" stroke="#6e6e6e" stroke-width="1"/></svg>
<svg style="position:absolute;left:51.95px;top:386.54999999999995px" width="10" height="8" viewBox="0 0 10 8"><path d="M0.8 2.5Q1 0.8 3 0.8H5Q6 0.8 6.5 2H8Q9.3 2.2 9.3 3.5L8.5 6.5Q8 7.5 6.5 7.5H2Q0.7 7.5 0.7 6Z" fill="#f5dc94" stroke="#c9a048" stroke-width="0.8"/><path d="M1.2 6.8L2.5 4H9.3" stroke="#fff6d0" stroke-width="0.9" fill="none"/></svg>
<div class="t" style="left:64.95px;top:386.24999999999994px;font-size:7.2px;color:#1e1e1e;">WEB-INF</div>

<svg style="position:absolute;left:52.45px;top:397.54999999999995px" width="10" height="8" viewBox="0 0 10 8"><circle cx="5.8" cy="3.9" r="3.3" fill="#f6fafd" stroke="#7fb2de" stroke-width="1.1"/><circle cx="5" cy="3.3" r="0.9" fill="#3a5a7a"/><path d="M5.5 6.5Q7.5 7 8.5 4.5" stroke="#3a78c0" stroke-width="1.3" fill="none"/><circle cx="7" cy="5" r="0.8" fill="#60b060"/><path d="M0.3 7.8L2.2 4.5L4.1 7.8Z" fill="#e6ac30"/></svg>
<div class="t" style="left:64.95px;top:397.44999999999993px;font-size:7.2px;color:#1e1e1e;">account.jsp</div>

<svg style="position:absolute;left:52.45px;top:408.75px" width="10" height="8" viewBox="0 0 10 8"><circle cx="5.8" cy="3.9" r="3.3" fill="#f6fafd" stroke="#7fb2de" stroke-width="1.1"/><circle cx="5" cy="3.3" r="0.9" fill="#3a5a7a"/><path d="M5.5 6.5Q7.5 7 8.5 4.5" stroke="#3a78c0" stroke-width="1.3" fill="none"/><circle cx="7" cy="5" r="0.8" fill="#60b060"/><path d="M0.3 7.8L2.2 4.5L4.1 7.8Z" fill="#e6ac30"/></svg>
<div class="t" style="left:64.95px;top:408.65px;font-size:7.2px;color:#1e1e1e;">affirmaddress.jsp</div>

<svg style="position:absolute;left:52.45px;top:419.95px" width="10" height="8" viewBox="0 0 10 8"><circle cx="5.8" cy="3.9" r="3.3" fill="#f6fafd" stroke="#7fb2de" stroke-width="1.1"/><circle cx="5" cy="3.3" r="0.9" fill="#3a5a7a"/><path d="M5.5 6.5Q7.5 7 8.5 4.5" stroke="#3a78c0" stroke-width="1.3" fill="none"/><circle cx="7" cy="5" r="0.8" fill="#60b060"/><path d="M0.3 7.8L2.2 4.5L4.1 7.8Z" fill="#e6ac30"/></svg>
<div class="t" style="left:64.95px;top:419.84999999999997px;font-size:7.2px;color:#1e1e1e;">BrandCulture.jsp</div>

<svg style="position:absolute;left:52.45px;top:431.15px" width="10" height="8" viewBox="0 0 10 8"><circle cx="5.8" cy="3.9" r="3.3" fill="#f6fafd" stroke="#7fb2de" stroke-width="1.1"/><circle cx="5" cy="3.3" r="0.9" fill="#3a5a7a"/><path d="M5.5 6.5Q7.5 7 8.5 4.5" stroke="#3a78c0" stroke-width="1.3" fill="none"/><circle cx="7" cy="5" r="0.8" fill="#60b060"/><path d="M0.3 7.8L2.2 4.5L4.1 7.8Z" fill="#e6ac30"/></svg>
<div class="t" style="left:64.95px;top:431.04999999999995px;font-size:7.2px;color:#1e1e1e;">delivery.jsp</div>

<svg style="position:absolute;left:52.45px;top:442.34999999999997px" width="10" height="8" viewBox="0 0 10 8"><circle cx="5.8" cy="3.9" r="3.3" fill="#f6fafd" stroke="#7fb2de" stroke-width="1.1"/><circle cx="5" cy="3.3" r="0.9" fill="#3a5a7a"/><path d="M5.5 6.5Q7.5 7 8.5 4.5" stroke="#3a78c0" stroke-width="1.3" fill="none"/><circle cx="7" cy="5" r="0.8" fill="#60b060"/><path d="M0.3 7.8L2.2 4.5L4.1 7.8Z" fill="#e6ac30"/></svg>
<div class="t" style="left:64.95px;top:442.24999999999994px;font-size:7.2px;color:#1e1e1e;">error.jsp</div>

<svg style="position:absolute;left:52.45px;top:453.54999999999995px" width="10" height="8" viewBox="0 0 10 8"><circle cx="5.8" cy="3.9" r="3.3" fill="#f6fafd" stroke="#7fb2de" stroke-width="1.1"/><circle cx="5" cy="3.3" r="0.9" fill="#3a5a7a"/><path d="M5.5 6.5Q7.5 7 8.5 4.5" stroke="#3a78c0" stroke-width="1.3" fill="none"/><circle cx="7" cy="5" r="0.8" fill="#60b060"/><path d="M0.3 7.8L2.2 4.5L4.1 7.8Z" fill="#e6ac30"/></svg>
<div class="t" style="left:64.95px;top:453.44999999999993px;font-size:7.2px;color:#1e1e1e;">evaluate.jsp</div>

<svg style="position:absolute;left:52.45px;top:464.75px" width="10" height="8" viewBox="0 0 10 8"><circle cx="5.8" cy="3.9" r="3.3" fill="#f6fafd" stroke="#7fb2de" stroke-width="1.1"/><circle cx="5" cy="3.3" r="0.9" fill="#3a5a7a"/><path d="M5.5 6.5Q7.5 7 8.5 4.5" stroke="#3a78c0" stroke-width="1.3" fill="none"/><circle cx="7" cy="5" r="0.8" fill="#60b060"/><path d="M0.3 7.8L2.2 4.5L4.1 7.8Z" fill="#e6ac30"/></svg>
<div class="t" style="left:64.95px;top:464.65px;font-size:7.2px;color:#1e1e1e;">indent.jsp</div>

<svg style="position:absolute;left:52.45px;top:475.95px" width="10" height="8" viewBox="0 0 10 8"><circle cx="5.8" cy="3.9" r="3.3" fill="#f6fafd" stroke="#7fb2de" stroke-width="1.1"/><circle cx="5" cy="3.3" r="0.9" fill="#3a5a7a"/><path d="M5.5 6.5Q7.5 7 8.5 4.5" stroke="#3a78c0" stroke-width="1.3" fill="none"/><circle cx="7" cy="5" r="0.8" fill="#60b060"/><path d="M0.3 7.8L2.2 4.5L4.1 7.8Z" fill="#e6ac30"/></svg>
<div class="t" style="left:64.95px;top:475.84999999999997px;font-size:7.2px;color:#1e1e1e;">index.jsp</div>

<svg style="position:absolute;left:52.45px;top:487.15px" width="10" height="8" viewBox="0 0 10 8"><circle cx="5.8" cy="3.9" r="3.3" fill="#f6fafd" stroke="#7fb2de" stroke-width="1.1"/><circle cx="5" cy="3.3" r="0.9" fill="#3a5a7a"/><path d="M5.5 6.5Q7.5 7 8.5 4.5" stroke="#3a78c0" stroke-width="1.3" fill="none"/><circle cx="7" cy="5" r="0.8" fill="#60b060"/><path d="M0.3 7.8L2.2 4.5L4.1 7.8Z" fill="#e6ac30"/></svg>
<div class="t" style="left:64.95px;top:487.04999999999995px;font-size:7.2px;color:#1e1e1e;">information.jsp</div>

<svg style="position:absolute;left:52.45px;top:498.34999999999997px" width="10" height="8" viewBox="0 0 10 8"><circle cx="5.8" cy="3.9" r="3.3" fill="#f6fafd" stroke="#7fb2de" stroke-width="1.1"/><circle cx="5" cy="3.3" r="0.9" fill="#3a5a7a"/><path d="M5.5 6.5Q7.5 7 8.5 4.5" stroke="#3a78c0" stroke-width="1.3" fill="none"/><circle cx="7" cy="5" r="0.8" fill="#60b060"/><path d="M0.3 7.8L2.2 4.5L4.1 7.8Z" fill="#e6ac30"/></svg>
<div class="t" style="left:64.95px;top:498.24999999999994px;font-size:7.2px;color:#1e1e1e;">lineitem.jsp</div>

<svg style="position:absolute;left:52.45px;top:509.54999999999995px" width="10" height="8" viewBox="0 0 10 8"><circle cx="5.8" cy="3.9" r="3.3" fill="#f6fafd" stroke="#7fb2de" stroke-width="1.1"/><circle cx="5" cy="3.3" r="0.9" fill="#3a5a7a"/><path d="M5.5 6.5Q7.5 7 8.5 4.5" stroke="#3a78c0" stroke-width="1.3" fill="none"/><circle cx="7" cy="5" r="0.8" fill="#60b060"/><path d="M0.3 7.8L2.2 4.5L4.1 7.8Z" fill="#e6ac30"/></svg>
<div class="t" style="left:64.95px;top:509.44999999999993px;font-size:7.2px;color:#1e1e1e;">login.jsp</div>

<svg style="position:absolute;left:52.45px;top:520.75px" width="10" height="8" viewBox="0 0 10 8"><circle cx="5.8" cy="3.9" r="3.3" fill="#f6fafd" stroke="#7fb2de" stroke-width="1.1"/><circle cx="5" cy="3.3" r="0.9" fill="#3a5a7a"/><path d="M5.5 6.5Q7.5 7 8.5 4.5" stroke="#3a78c0" stroke-width="1.3" fill="none"/><circle cx="7" cy="5" r="0.8" fill="#60b060"/><path d="M0.3 7.8L2.2 4.5L4.1 7.8Z" fill="#e6ac30"/></svg>
<div class="t" style="left:64.95px;top:520.65px;font-size:7.2px;color:#1e1e1e;">logistics.jsp</div>

<svg style="position:absolute;left:52.45px;top:531.95px" width="10" height="8" viewBox="0 0 10 8"><circle cx="5.8" cy="3.9" r="3.3" fill="#f6fafd" stroke="#7fb2de" stroke-width="1.1"/><circle cx="5" cy="3.3" r="0.9" fill="#3a5a7a"/><path d="M5.5 6.5Q7.5 7 8.5 4.5" stroke="#3a78c0" stroke-width="1.3" fill="none"/><circle cx="7" cy="5" r="0.8" fill="#60b060"/><path d="M0.3 7.8L2.2 4.5L4.1 7.8Z" fill="#e6ac30"/></svg>
<div class="t" style="left:64.95px;top:531.85px;font-size:7.2px;color:#1e1e1e;">mycar.jsp</div>

<svg style="position:absolute;left:52.45px;top:543.15px" width="10" height="8" viewBox="0 0 10 8"><circle cx="5.8" cy="3.9" r="3.3" fill="#f6fafd" stroke="#7fb2de" stroke-width="1.1"/><circle cx="5" cy="3.3" r="0.9" fill="#3a5a7a"/><path d="M5.5 6.5Q7.5 7 8.5 4.5" stroke="#3a78c0" stroke-width="1.3" fill="none"/><circle cx="7" cy="5" r="0.8" fill="#60b060"/><path d="M0.3 7.8L2.2 4.5L4.1 7.8Z" fill="#e6ac30"/></svg>
<div class="t" style="left:64.95px;top:543.05px;font-size:7.2px;color:#1e1e1e;">myfavorite.jsp</div>

<svg style="position:absolute;left:52.45px;top:554.3499999999999px" width="10" height="8" viewBox="0 0 10 8"><circle cx="5.8" cy="3.9" r="3.3" fill="#f6fafd" stroke="#7fb2de" stroke-width="1.1"/><circle cx="5" cy="3.3" r="0.9" fill="#3a5a7a"/><path d="M5.5 6.5Q7.5 7 8.5 4.5" stroke="#3a78c0" stroke-width="1.3" fill="none"/><circle cx="7" cy="5" r="0.8" fill="#60b060"/><path d="M0.3 7.8L2.2 4.5L4.1 7.8Z" fill="#e6ac30"/></svg>
<div class="t" style="left:64.95px;top:554.2499999999999px;font-size:7.2px;color:#1e1e1e;">mytracks.jsp</div>
<div style="left:2.5px;top:46.5px;width:9px;height:1px;background:repeating-linear-gradient(90deg,#b8c2ce 0 1px,transparent 1px 2px);"></div>
<svg style="position:absolute;left:3px;top:51px" width="7" height="7" viewBox="0 0 7 7"><path d="M1.5 5.5L5.5 1.5" stroke="#777" stroke-width="1.2"/><rect x="0.5" y="3" width="3" height="3.5" rx="1.2" fill="none" stroke="#666" stroke-width="1"/><rect x="3.5" y="0.5" width="3" height="3.5" rx="1.2" fill="none" stroke="#666" stroke-width="1"/></svg>
<div style="left:2px;top:63px;width:8px;height:6px;background:linear-gradient(135deg,#2a2a8a,#5a5ad0 50%,#20206a);"></div>
<div style="left:0px;top:534px;width:3.3px;height:33px;background:#4c535a;border-radius:0 1px 1px 0;"></div>
<div style="left:0.5px;top:545px;width:2px;height:12px;background:#7a8a5a;"></div>
<div style="left:155px;top:47.3px;width:7px;height:3px;border:1px solid #8a96a6;border-radius:1.5px;background:#eef2f7;"></div>
<div style="left:168px;top:47.7px;width:6.5px;height:5.7px;border:1px solid #7d8796;border-top-width:1.6px;border-radius:1px;background:#f4f6f9;"></div>
<svg style="position:absolute;left:123.7px;top:61.5px" width="8" height="8" viewBox="0 0 8 8"><rect x="0.5" y="0.5" width="6.5" height="7" rx="1" fill="#e8eef5" stroke="#7a8a9e" stroke-width="0.9"/><path d="M2 4H5.5" stroke="#3a5a8a" stroke-width="1"/></svg>
<div style="left:133.8px;top:59px;width:13px;height:12px;background:#d6e8fa;border:1px solid #c4dcf4;"></div>
<svg style="position:absolute;left:136px;top:60.5px" width="9" height="9" viewBox="0 0 9 9"><path d="M1 2.5Q4 0 7 2.5M1 6.5Q4 9 7 6.5" stroke="#d4a828" stroke-width="1.6" fill="none"/><path d="M2 3L6.5 6" stroke="#b88a20" stroke-width="1"/></svg>
<div style="left:148px;top:60px;width:1px;height:10px;background:#c8ced6;"></div>
<svg style="position:absolute;left:153.7px;top:61px" width="8" height="8" viewBox="0 0 8 8"><circle cx="2.5" cy="3" r="2" fill="#b4b4b4"/><circle cx="5.5" cy="3.5" r="2" fill="#c8c8c8"/><circle cx="3.5" cy="6" r="1.8" fill="#8a8a8a"/></svg>
<svg style="position:absolute;left:170.8px;top:62px" width="6" height="4" viewBox="0 0 6 4"><path d="M0.5 0.5H5.5L3 3.5Z" fill="#fff" stroke="#777" stroke-width="0.8"/></svg>
<div style="left:169.5px;top:71px;width:8.5px;height:478px;background:#f0f0f0;"></div>
<div style="left:169.5px;top:81px;width:8.5px;height:352.7px;background:#cdcdcd;"></div>
<svg style="position:absolute;left:171px;top:74.5px" width="6" height="4" viewBox="0 0 6 4"><path d="M0.7 3.3L3 1L5.3 3.3" stroke="#333" stroke-width="1.1" fill="none"/></svg>
<svg style="position:absolute;left:171px;top:551px" width="6" height="4" viewBox="0 0 6 4"><path d="M0.7 0.7L3 3L5.3 0.7" stroke="#333" stroke-width="1.1" fill="none"/></svg>
<div style="left:18.4px;top:558.6px;width:159.6px;height:8.5px;background:#f0f0f0;border-radius:0 0 0 2px;"></div>
<div style="left:29px;top:558.6px;width:123px;height:8.5px;background:#cdcdcd;"></div>
<svg style="position:absolute;left:22px;top:560px" width="4" height="6" viewBox="0 0 4 6"><path d="M3.3 0.7L1 3L3.3 5.3" stroke="#333" stroke-width="1.1" fill="none"/></svg>
<svg style="position:absolute;left:163px;top:560px" width="4" height="6" viewBox="0 0 4 6"><path d="M0.7 0.7L3 3L0.7 5.3" stroke="#333" stroke-width="1.1" fill="none"/></svg>
<div style="left:183.5px;top:43.5px;width:620px;height:525px;background:#fff;border:1.2px solid #a6b1c0;border-radius:3px 0 0 3px;"></div>
<div style="left:237.8px;top:44px;width:562px;height:13.3px;background:#6383b3;border-top:1px solid #4e6e9e;border-bottom:1px solid #52719f;border-radius:3px 0 0 0;"></div>
<div style="left:184.7px;top:44.5px;width:53px;height:13px;background:#fff;border-radius:3px 3px 0 0;"></div>
<div style="left:184.7px;top:57.3px;width:616px;height:14px;background:linear-gradient(#ffffff,#f6f7f9);border-bottom:1px solid #d6d9dd;"></div>
<div style="left:184.7px;top:70.5px;width:7px;height:488px;background:#f0f0f0;"></div>
<div style="left:191.7px;top:70.5px;width:20.5px;height:488px;background:#fafafa;"></div>
<svg style="position:absolute;left:186.5px;top:46px" width="7" height="9" viewBox="0 0 7 9"><path d="M0.5 0.5H4.8L6.5 2.2V8.5H0.5Z" fill="#fdfdf6" stroke="#7d7d6a" stroke-width="0.9"/><path d="M4 2.3V6Q4 7.3 2.5 7.1" stroke="#2d4fa0" stroke-width="1.1" fill="none"/></svg>
<svg style="position:absolute;left:185px;top:51px" width="4" height="5" viewBox="0 0 4 5"><path d="M0 5L2 1L4 5Z" fill="#e0a030"/></svg>
<div class="t" style="left:195px;top:47.4px;font-size:7.2px;color:#5a7aa8;-webkit-text-stroke:0.05px #5a7aa8;">DBUtil.java</div>
<div class="t" style="left:231.3px;top:47.2px;font-size:9px;color:#9aa;font-size:9px;">×</div>
<svg style="position:absolute;left:242px;top:46px" width="7" height="9" viewBox="0 0 7 9"><path d="M0.5 0.5H4.8L6.5 2.2V8.5H0.5Z" fill="#fdfdf6" stroke="#7d7d6a" stroke-width="0.9"/><path d="M4 2.3V6Q4 7.3 2.5 7.1" stroke="#2d4fa0" stroke-width="1.1" fill="none"/></svg>
<div class="t" style="left:248.8px;top:47.4px;font-size:7.2px;color:#eef3fb;-webkit-text-stroke:0.05px #eef3fb;">UserImpl.java</div>
<svg style="position:absolute;left:306.5px;top:46px" width="7" height="9" viewBox="0 0 7 9"><path d="M0.5 0.5H4.8L6.5 2.2V8.5H0.5Z" fill="#fdfdf6" stroke="#7d7d6a" stroke-width="0.9"/><path d="M4 2.3V6Q4 7.3 2.5 7.1" stroke="#2d4fa0" stroke-width="1.1" fill="none"/></svg>
<div class="t" style="left:314px;top:47.4px;font-size:7.2px;color:#eef3fb;-webkit-text-stroke:0.05px #eef3fb;">GoodsinfoImpl.java</div>
<svg style="position:absolute;left:390px;top:46px" width="7" height="9" viewBox="0 0 7 9"><path d="M0.5 0.5H4.8L6.5 2.2V8.5H0.5Z" fill="#fdfdf6" stroke="#7d7d6a" stroke-width="0.9"/><path d="M4 2.3V6Q4 7.3 2.5 7.1" stroke="#2d4fa0" stroke-width="1.1" fill="none"/></svg>
<div class="t" style="left:397px;top:47.4px;font-size:7.2px;color:#eef3fb;-webkit-text-stroke:0.05px #eef3fb;">GoodsImpl.java</div>
<svg style="position:absolute;left:461px;top:46px" width="7" height="9" viewBox="0 0 7 9"><path d="M0.5 0.5H4.8L6.5 2.2V8.5H0.5Z" fill="#fdfdf6" stroke="#7d7d6a" stroke-width="0.9"/><path d="M4 2.3V6Q4 7.3 2.5 7.1" stroke="#2d4fa0" stroke-width="1.1" fill="none"/></svg>
<div class="t" style="left:469px;top:47.4px;font-size:7.2px;color:#eef3fb;-webkit-text-stroke:0.05px #eef3fb;">Alternateplayimpl.java</div>
<svg style="position:absolute;left:552px;top:46px" width="8" height="9" viewBox="0 0 8 9"><circle cx="4" cy="4.5" r="3.4" fill="#7fb0dc" stroke="#dfe8f3" stroke-width="0.8"/><path d="M2 3.5Q4 2 6 4" stroke="#e8c050" stroke-width="1" fill="none"/></svg>
<div class="t" style="left:561px;top:47.4px;font-size:7.2px;color:#eef3fb;-webkit-text-stroke:0.05px #eef3fb;">MyEclipse Web Browser</div>
<svg style="position:absolute;left:650px;top:46px" width="8" height="9" viewBox="0 0 8 9"><path d="M0.5 0.5H5L7 2.5V8.5H0.5Z" fill="#f4f6f8" stroke="#c0c8d2" stroke-width="0.8"/><circle cx="4.5" cy="5" r="2.2" fill="#5b9bd5"/><path d="M0.3 8.7L1.8 6L3.3 8.7Z" fill="#e6a82c"/></svg>
<div class="t" style="left:659px;top:47.4px;font-size:7.2px;color:#eef3fb;-webkit-text-stroke:0.05px #eef3fb;">login.jsp</div>
<svg style="position:absolute;left:188.7px;top:62.5px" width="3.2" height="4.8" viewBox="0 0 4 6"><path d="M0 0L4 3L0 6Z" fill="#111"/></svg>
<svg style="position:absolute;left:196px;top:59px" width="11" height="10" viewBox="0 0 11 10"><circle cx="5" cy="4.5" r="3.6" fill="#f3d88c" stroke="#b08a36" stroke-width="0.8"/><circle cx="7" cy="5" r="2.6" fill="#6aa3d8" stroke="#2f6fb0" stroke-width="0.6"/><path d="M1 9.5L2.8 6.5L4.4 9.5Z" fill="#e6a82c"/></svg>
<div class="t" style="left:207.5px;top:60.6px;font-size:7.2px;color:#1e1e1e;">JavaWebPro</div>
<svg style="position:absolute;left:252.5px;top:62.5px" width="3.2" height="4.8" viewBox="0 0 4 6"><path d="M0 0L4 3L0 6Z" fill="#111"/></svg>
<svg style="position:absolute;left:259px;top:60px" width="11" height="8" viewBox="0 0 11 8"><ellipse cx="5.5" cy="5" rx="5" ry="2.6" fill="#e8b25a" stroke="#a06d20" stroke-width="0.8"/><ellipse cx="5.5" cy="3" rx="3" ry="2.6" fill="#d29a48" stroke="#a06d20" stroke-width="0.8"/></svg>
<div class="t" style="left:270.5px;top:60.6px;font-size:7.2px;color:#1e1e1e;">src</div>
<svg style="position:absolute;left:285.0px;top:62.5px" width="3.2" height="4.8" viewBox="0 0 4 6"><path d="M0 0L4 3L0 6Z" fill="#111"/></svg>
<svg style="position:absolute;left:291px;top:59.5px" width="10" height="9" viewBox="0 0 10 9"><rect x="2.5" y="0.5" width="7" height="7" fill="#f0cf98" stroke="#b37a3c" stroke-width="0.9"/><path d="M6 0.5V7.5M2.5 4H9.5" stroke="#b37a3c" stroke-width="0.9"/><path d="M0 9L1.7 5.5L3.4 9Z" fill="#e0a030"/></svg>
<div class="t" style="left:302.4px;top:60.6px;font-size:7.2px;color:#1e1e1e;">cn.com.baidu.util</div>
<svg style="position:absolute;left:362.0px;top:62.5px" width="3.2" height="4.8" viewBox="0 0 4 6"><path d="M0 0L4 3L0 6Z" fill="#111"/></svg>
<svg style="position:absolute;left:367px;top:59px" width="11" height="10" viewBox="0 0 11 10"><circle cx="5.5" cy="4.5" r="3.5" fill="none" stroke="#3d8a3d" stroke-width="1.5"/><path d="M3.5 4.5H7.5" stroke="#3d8a3d" stroke-width="1.2"/><path d="M0.5 9.8L2.3 6.5L4.1 9.8Z" fill="#e0a030"/><rect x="6" y="7" width="4" height="3" fill="#6a8fc0"/></svg>
<div class="t" style="left:380px;top:60.6px;font-size:7.2px;color:#1e1e1e;">DBUtil</div>
<svg style="position:absolute;left:405.5px;top:62.5px" width="3.2" height="4.8" viewBox="0 0 4 6"><path d="M0 0L4 3L0 6Z" fill="#111"/></svg>
<svg style="position:absolute;left:412px;top:58.5px" width="10" height="11" viewBox="0 0 10 11"><path d="M1 9L6 4" stroke="#4a8a2a" stroke-width="3"/><circle cx="2.5" cy="8" r="1.8" fill="#e0b040"/><text x="6" y="4" font-size="5" fill="#c03030" font-family="Liberation Sans">S</text></svg>
<div class="t" style="left:423.75px;top:60.6px;font-size:7.2px;color:#1e1e1e;">main(String[]) : void</div>
<div style="left:184.7px;top:70.5px;width:615px;height:488px;overflow:hidden;">
<div class="ln" style="left:0px;top:3.30px;width:22.30000000000001px;height:10.625px;">1</div>
<div class="ln" style="left:0px;top:13.92px;width:22.30000000000001px;height:10.625px;">2</div>
<div class="ln" style="left:0px;top:24.55px;width:22.30000000000001px;height:10.625px;">3</div>
<div class="ln" style="left:0px;top:35.17px;width:22.30000000000001px;height:10.625px;">4</div>
<div class="ln" style="left:0px;top:45.80px;width:22.30000000000001px;height:10.625px;">5</div>
<div class="ln" style="left:0px;top:56.42px;width:22.30000000000001px;height:10.625px;">6</div>
<div class="ln" style="left:0px;top:67.05px;width:22.30000000000001px;height:10.625px;">7</div>
<div class="ln" style="left:0px;top:77.67px;width:22.30000000000001px;height:10.625px;">8</div>
<div class="ln" style="left:0px;top:88.30px;width:22.30000000000001px;height:10.625px;">9</div>
<div class="ln" style="left:0px;top:98.92px;width:22.30000000000001px;height:10.625px;">10</div>
<div class="ln" style="left:0px;top:109.55px;width:22.30000000000001px;height:10.625px;">11</div>
<div class="ln" style="left:0px;top:120.17px;width:22.30000000000001px;height:10.625px;">12</div>
<div class="ln" style="left:0px;top:130.80px;width:22.30000000000001px;height:10.625px;">13</div>
<div class="ln" style="left:0px;top:141.43px;width:22.30000000000001px;height:10.625px;">14</div>
<div class="ln" style="left:0px;top:152.05px;width:22.30000000000001px;height:10.625px;">15</div>
<div class="ln" style="left:0px;top:162.68px;width:22.30000000000001px;height:10.625px;">16</div>
<div class="ln" style="left:0px;top:173.30px;width:22.30000000000001px;height:10.625px;">17</div>
<div class="ln" style="left:0px;top:183.93px;width:22.30000000000001px;height:10.625px;">18</div>
<div class="ln" style="left:0px;top:194.55px;width:22.30000000000001px;height:10.625px;">19</div>
<div class="ln" style="left:0px;top:205.18px;width:22.30000000000001px;height:10.625px;">20</div>
<div class="ln" style="left:0px;top:215.80px;width:22.30000000000001px;height:10.625px;">21</div>
<div class="ln" style="left:0px;top:226.43px;width:22.30000000000001px;height:10.625px;">22</div>
<div class="ln" style="left:0px;top:237.05px;width:22.30000000000001px;height:10.625px;">23</div>
<div class="ln" style="left:0px;top:247.68px;width:22.30000000000001px;height:10.625px;">24</div>
<div class="ln" style="left:0px;top:258.30px;width:22.30000000000001px;height:10.625px;">25</div>
<div class="ln" style="left:0px;top:268.93px;width:22.30000000000001px;height:10.625px;">26</div>
<div class="ln" style="left:0px;top:279.55px;width:22.30000000000001px;height:10.625px;">27</div>
<div class="ln" style="left:0px;top:290.18px;width:22.30000000000001px;height:10.625px;">28</div>
<div class="ln" style="left:0px;top:300.80px;width:22.30000000000001px;height:10.625px;">29</div>
<div class="ln" style="left:0px;top:311.43px;width:22.30000000000001px;height:10.625px;">30</div>
<div class="ln" style="left:0px;top:322.05px;width:22.30000000000001px;height:10.625px;">31</div>
<div class="ln" style="left:0px;top:332.68px;width:22.30000000000001px;height:10.625px;">32</div>
<div class="ln" style="left:0px;top:343.30px;width:22.30000000000001px;height:10.625px;">33</div>
<div class="ln" style="left:0px;top:353.93px;width:22.30000000000001px;height:10.625px;">34</div>
<div class="ln" style="left:0px;top:364.55px;width:22.30000000000001px;height:10.625px;">35</div>
<div class="ln" style="left:0px;top:375.18px;width:22.30000000000001px;height:10.625px;">36</div>
<div class="ln" style="left:0px;top:385.80px;width:22.30000000000001px;height:10.625px;">37</div>
<div class="ln" style="left:0px;top:396.43px;width:22.30000000000001px;height:10.625px;">38</div>
<div class="ln" style="left:0px;top:407.05px;width:22.30000000000001px;height:10.625px;">39</div>
<div class="ln" style="left:0px;top:417.68px;width:22.30000000000001px;height:10.625px;">40</div>
<div class="ln" style="left:0px;top:428.30px;width:22.30000000000001px;height:10.625px;">41</div>
<div class="ln" style="left:0px;top:438.93px;width:22.30000000000001px;height:10.625px;">42</div>
<div class="ln" style="left:0px;top:449.55px;width:22.30000000000001px;height:10.625px;">43</div>
<div class="ln" style="left:0px;top:460.18px;width:22.30000000000001px;height:10.625px;">44</div>
<div class="ln" style="left:0px;top:470.80px;width:22.30000000000001px;height:10.625px;">45</div>
<div class="ln" style="left:0px;top:481.43px;width:22.30000000000001px;height:10.625px;">46</div>
<div class="c" style="left:30.0px;top:3.30px;height:10.625px;"><span class="k">package</span> cn.com.baidu.util;</div>
<div class="c" style="left:30.0px;top:24.55px;height:10.625px;"><span class="k">import</span> java.sql.Connection;</div>
<div class="c" style="left:30.0px;top:35.17px;height:10.625px;"><span class="k">import</span> java.sql.DriverManager;</div>
<div class="c" style="left:30.0px;top:45.80px;height:10.625px;"><span class="k">import</span> java.sql.PreparedStatement;</div>
<div class="c" style="left:30.0px;top:56.42px;height:10.625px;"><span class="k">import</span> java.sql.ResultSet;</div>
<div class="c" style="left:30.0px;top:67.05px;height:10.625px;"><span class="k">import</span> java.sql.SQLException;</div>
<div class="c" style="left:30.0px;top:88.30px;height:10.625px;"><span class="k">import</span> cn.com.baidu.dao.impl.Alternateplayimpl;</div>
<div class="c" style="left:30.0px;top:98.92px;height:10.625px;"><span class="k">import</span> cn.com.baidu.dao.impl.GoodsImpl;</div>
<div class="c" style="left:30.0px;top:109.55px;height:10.625px;"><span class="k">import</span> cn.com.baidu.dao.impl.UserImpl;</div>
<div class="c" style="left:30.0px;top:120.17px;height:10.625px;"><span class="k">import</span> cn.com.baidu.entity.UserInfo;</div>
<div class="c" style="left:30.0px;top:141.43px;height:10.625px;"><span class="k">public</span> <span class="k">class</span> DBUtil {</div>
<div class="c" style="left:30.0px;top:162.68px;height:10.625px;">    <span class="cm">// <span class="zh">连</span><span class="zh">接</span><span class="zh">数</span><span class="zh">据</span><span class="zh">库</span><span class="zh">用</span><span class="zh">到</span><span class="zh">的</span><span class="zh">常</span><span class="zh" style="margin-right:1.4px">量</span>1.<span class="zh">连</span><span class="zh">接</span><span class="zh">驱</span><span class="zh">动</span><span class="zh">地</span><span class="zh" style="margin-right:1.4px">址</span>2.<span class="zh">连</span><span class="zh">接</span><span class="zh">数</span><span class="zh">据</span><span class="zh">库</span><span class="zh" style="margin-right:1.4px">的</span>url 3.<span class="zh">连</span><span class="zh">接</span><span class="zh">数</span><span class="zh">据</span><span class="zh">库</span><span class="zh">的</span><span class="zh">用</span><span class="zh">户</span><span class="zh" style="margin-right:1.4px">名</span>(root) 4.<span class="zh">连</span><span class="zh">接</span><span class="zh">数</span><span class="zh">据</span><span class="zh">库</span><span class="zh">的</span><span class="zh">密</span><span class="zh" style="margin-right:1.4px">码</span>(root)</span></div>
<div class="c" style="left:30.0px;top:173.30px;height:10.625px;">    <span class="k">public</span> <span class="k">static</span> <span class="k">final</span> String <span class="f">DRIVER_URL</span>=<span class="s">&quot;com.mysql.jdbc.Driver&quot;</span>;</div>
<div class="c" style="left:30.0px;top:183.93px;height:10.625px;">    <span class="k">public</span> <span class="k">static</span> <span class="k">final</span> String <span class="f">DB_URL</span>=<span class="s">&quot;jdbc:mysql://localhost:3306/tianyuan?useUnicode=true&amp;characterEncoding=utf8&quot;</span>;</div>
<div class="c" style="left:30.0px;top:194.55px;height:10.625px;">    <span class="k">public</span> <span class="k">static</span> <span class="k">final</span> String <span class="f">USER_NAME</span>=<span class="s">&quot;root&quot;</span>;</div>
<div class="c" style="left:30.0px;top:205.18px;height:10.625px;">    <span class="k">public</span> <span class="k">static</span> <span class="k">final</span> String <span class="f">USER_PWD</span>=<span class="s">&quot;root&quot;</span>;</div>
<div class="c" style="left:30.0px;top:226.43px;height:10.625px;">    <span class="cm">// <span class="zh">验</span><span class="zh">证</span><span class="zh">驱</span><span class="zh">动</span><span class="zh">是</span><span class="zh">否</span><span class="zh">存</span><span class="zh" style="margin-right:1.4px">在</span></span></div>
<div class="c" style="left:30.0px;top:237.05px;height:10.625px;">    <span class="k">static</span> {</div>
<div class="c" style="left:30.0px;top:247.68px;height:10.625px;">        <span class="k">try</span> {</div>
<div class="c" style="left:30.0px;top:258.30px;height:10.625px;">            Class.<span class="i">forName</span>(<span class="f">DRIVER_URL</span>);</div>
<div class="c" style="left:30.0px;top:268.93px;height:10.625px;">        } <span class="k">catch</span> (ClassNotFoundException e) {</div>
<div class="c" style="left:30.0px;top:279.55px;height:10.625px;">            e.printStackTrace();</div>
<div class="c" style="left:30.0px;top:290.18px;height:10.625px;">        }</div>
<div class="c" style="left:30.0px;top:300.80px;height:10.625px;">    }</div>
<div class="c" style="left:30.0px;top:322.05px;height:10.625px;">    <span class="jd">/**</span></div>
<div class="c" style="left:30.0px;top:332.68px;height:10.625px;">     <span class="jd">* <span class="zh">连</span><span class="zh">接</span><span class="zh">数</span><span class="zh">据</span><span class="zh">库</span><span class="zh">的</span><span class="zh">方</span><span class="zh">法</span><span class="zh">注</span><span class="zh">意</span><span class="zh" style="margin-right:1.4px">：</span>Connection<span class="zh">类</span><span class="zh" style="margin-right:1.4px">是</span>java.sql<span class="zh" style="margin-right:1.4px">。</span>Connection<span class="zh">接</span><span class="zh" style="margin-right:1.4px">口</span></span></div>
<div class="c" style="left:30.0px;top:343.30px;height:10.625px;">     <span class="jd">*/</span></div>
<div class="c" style="left:30.0px;top:364.55px;height:10.625px;">    <span class="cm">// <span class="zh">连</span><span class="zh">接</span><span class="zh">数</span><span class="zh">据</span><span class="zh">库</span><span class="zh">的</span><span class="zh">方</span><span class="zh" style="margin-right:1.4px">法</span></span></div>
<div class="c" style="left:30.0px;top:375.18px;height:10.625px;">    <span class="k">public</span> Connection getconn() {</div>
<div class="c" style="left:30.0px;top:385.80px;height:10.625px;">        <span class="cm">// <span class="zh">返</span><span class="zh">回</span><span class="zh">数</span><span class="zh">据</span><span class="zh">连</span><span class="zh" style="margin-right:1.4px">接</span></span></div>
<div class="c" style="left:30.0px;top:396.43px;height:10.625px;">        Connection conn = <span class="k">null</span>;</div>
<div class="c" style="left:30.0px;top:407.05px;height:10.625px;">        <span class="cm">// <span class="zh">异</span><span class="zh">常</span><span class="zh">处</span><span class="zh" style="margin-right:1.4px">理</span></span></div>
<div class="c" style="left:30.0px;top:428.30px;height:10.625px;">        <span class="k">try</span> {</div>
<div class="c" style="left:30.0px;top:438.93px;height:10.625px;">            conn = DriverManager.<span class="i">getConnection</span>(<span class="f">DB_URL</span>, <span class="f">USER_NAME</span>, <span class="f">USER_PWD</span>);</div>
<div class="c" style="left:30.0px;top:449.55px;height:10.625px;">        } <span class="k">catch</span> (SQLException e) {</div>
<div class="c" style="left:30.0px;top:460.18px;height:10.625px;">            <span class="cm">// <span class="todo">TODO</span> Auto-generated catch block</span></div>
<div class="c" style="left:30.0px;top:470.80px;height:10.625px;">            e.printStackTrace();</div>
<div class="c" style="left:30.0px;top:481.43px;height:10.625px;">        }</div>
</div>
<svg style="position:absolute;left:207.3px;top:95.75px" width="5" height="5" viewBox="0 0 5 5"><circle cx="2.5" cy="2.5" r="2.2" fill="#e2ebf5" stroke="#adc0d8" stroke-width="0.6"/><path d="M1.2 2.5H3.8" stroke="#7f9bbf" stroke-width="0.7"/></svg>
<svg style="position:absolute;left:207.3px;top:308.25px" width="5" height="5" viewBox="0 0 5 5"><circle cx="2.5" cy="2.5" r="2.2" fill="#e2ebf5" stroke="#adc0d8" stroke-width="0.6"/><path d="M1.2 2.5H3.8" stroke="#7f9bbf" stroke-width="0.7"/></svg>
<svg style="position:absolute;left:207.3px;top:393.25px" width="5" height="5" viewBox="0 0 5 5"><circle cx="2.5" cy="2.5" r="2.2" fill="#e2ebf5" stroke="#adc0d8" stroke-width="0.6"/><path d="M1.2 2.5H3.8" stroke="#7f9bbf" stroke-width="0.7"/></svg>
<svg style="position:absolute;left:207.3px;top:446.375px" width="5" height="5" viewBox="0 0 5 5"><circle cx="2.5" cy="2.5" r="2.2" fill="#e2ebf5" stroke="#adc0d8" stroke-width="0.6"/><path d="M1.2 2.5H3.8" stroke="#7f9bbf" stroke-width="0.7"/></svg>
<svg style="position:absolute;left:185px;top:529.175px" width="8" height="9" viewBox="0 0 8 9"><rect x="0.5" y="0.5" width="6.5" height="8" fill="#f2f4f7" stroke="#9aa6b4" stroke-width="0.7"/><path d="M1.5 7.5L6 2" stroke="#2d5fb0" stroke-width="1.4"/><rect x="0.5" y="6.5" width="2.5" height="2" fill="#e0b030"/></svg>
<svg style="position:absolute;left:421px;top:239.98px" width="15" height="2" viewBox="0 0 15 2"><path d="M0 1.5L1.5 0.5L3 1.5L4.5 0.5L6 1.5L7.5 0.5L9 1.5L10.5 0.5L12 1.5L13.5 0.5L15 1.5" stroke="#e0b050" stroke-width="0.6" fill="none"/></svg>
<div style="left:184.7px;top:558.5px;width:615.3px;height:8.3px;background:#f0f0f0;"></div>
<div style="left:186px;top:568.5px;width:614px;height:1.5px;background:#8290a5;"></div>
<svg style="position:absolute;left:216.5px;top:559.5px" width="4" height="6" viewBox="0 0 4 6"><path d="M3.3 0.7L1 3L3.3 5.3" stroke="#9a9a9a" stroke-width="1" fill="none"/></svg>
</body></html>
